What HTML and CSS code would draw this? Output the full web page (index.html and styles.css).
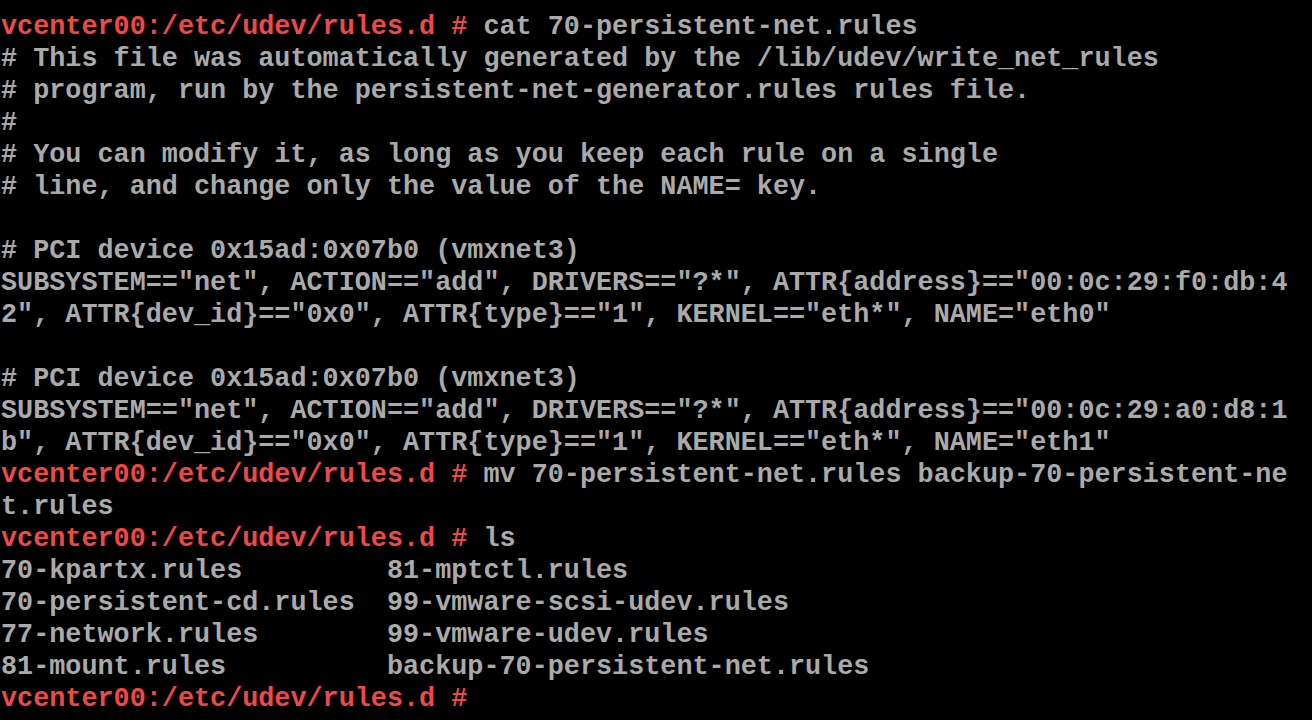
FILE: index.html
```html
<!DOCTYPE html>
<html>
<head>
<meta charset="utf-8">
<link rel="stylesheet" href="styles.css">
</head>
<body>
<div class="term">
<div class="ln"><span class="ps">vcenter00:/etc/udev/rules.d #</span> cat 70-persistent-net.rules</div>
<div class="ln"># This file was automatically generated by the /lib/udev/write_net_rules</div>
<div class="ln"># program, run by the persistent-net-generator.rules rules file.</div>
<div class="ln">#</div>
<div class="ln"># You can modify it, as long as you keep each rule on a single</div>
<div class="ln"># line, and change only the value of the NAME= key.</div>
<div class="ln"> </div>
<div class="ln"># PCI device 0x15ad:0x07b0 (vmxnet3)</div>
<div class="ln">SUBSYSTEM=="net", ACTION=="add", DRIVERS=="?*", ATTR{address}=="00:0c:29:f0:db:4</div>
<div class="ln">2", ATTR{dev_id}=="0x0", ATTR{type}=="1", KERNEL=="eth*", NAME="eth0"</div>
<div class="ln"> </div>
<div class="ln"># PCI device 0x15ad:0x07b0 (vmxnet3)</div>
<div class="ln">SUBSYSTEM=="net", ACTION=="add", DRIVERS=="?*", ATTR{address}=="00:0c:29:a0:d8:1</div>
<div class="ln">b", ATTR{dev_id}=="0x0", ATTR{type}=="1", KERNEL=="eth*", NAME="eth1"</div>
<div class="ln"><span class="ps">vcenter00:/etc/udev/rules.d #</span> mv 70-persistent-net.rules backup-70-persistent-ne</div>
<div class="ln">t.rules</div>
<div class="ln"><span class="ps">vcenter00:/etc/udev/rules.d #</span> ls</div>
<div class="ln">70-kpartx.rules         81-mptctl.rules</div>
<div class="ln">70-persistent-cd.rules  99-vmware-scsi-udev.rules</div>
<div class="ln">77-network.rules        99-vmware-udev.rules</div>
<div class="ln">81-mount.rules          backup-70-persistent-net.rules</div>
<div class="ln"><span class="ps">vcenter00:/etc/udev/rules.d #</span></div>
</div>
</body>
</html>
```
FILE: styles.css
```css
html, body {
  margin: 0;
  padding: 0;
  background: #000;
  height: 100%;
  overflow: hidden;
}
.term {
  padding: 11px 0 0 1px;
  font-family: "Liberation Mono", "DejaVu Sans Mono", monospace;
  font-size: 26.8px;
  font-weight: bold;
  line-height: 32px;
  color: #aaaaaa;
}
.ln {
  white-space: pre;
  height: 32px;
}
.ps {
  color: #f04848;
}
```
